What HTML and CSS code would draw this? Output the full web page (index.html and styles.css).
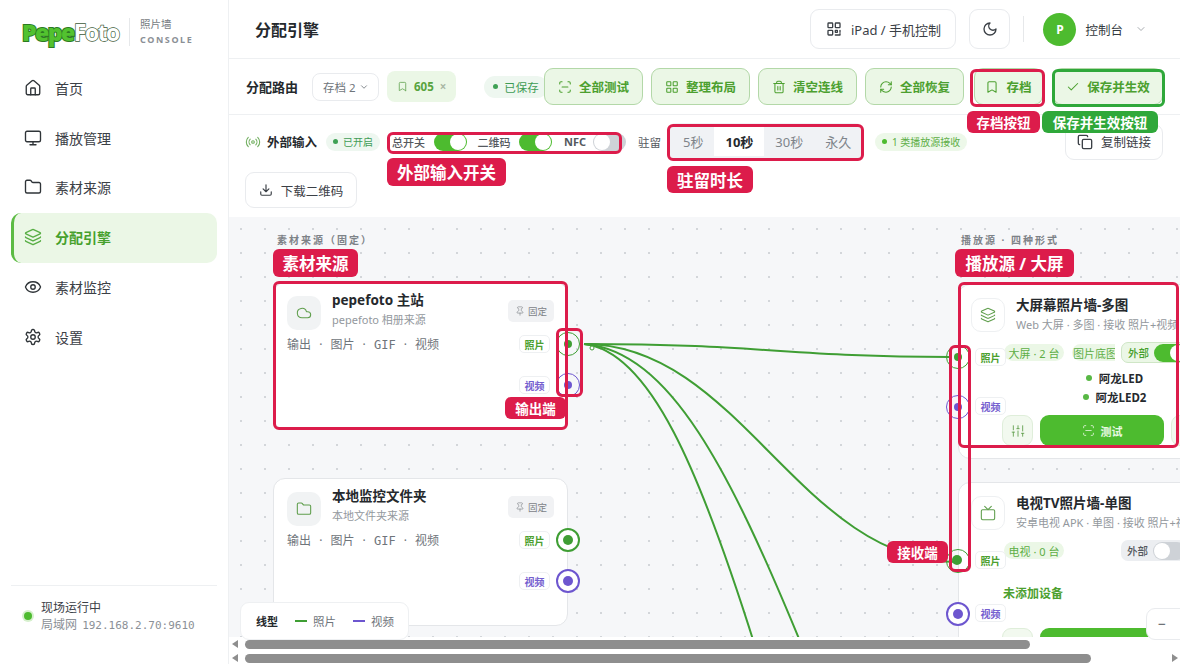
FILE: index.html
```html
<!DOCTYPE html>
<html lang="zh-CN">
<head>
    <meta charset="UTF-8">
    <meta name="viewport" content="width=device-width, initial-scale=1.0">
    <title>分配引擎 - PepeFoto Console</title>
    <link rel="stylesheet" href="styles.css">
</head>
<body>
    <!-- icon sprite -->
    <svg class="sprite" aria-hidden="true">
        <symbol id="i-home" viewBox="0 0 24 24"><path d="M15 21v-8a1 1 0 0 0-1-1h-4a1 1 0 0 0-1 1v8"/><path d="M3 10a2 2 0 0 1 .709-1.528l7-6a2 2 0 0 1 2.582 0l7 6A2 2 0 0 1 21 10v9a2 2 0 0 1-2 2H5a2 2 0 0 1-2-2z"/></symbol>
        <symbol id="i-monitor" viewBox="0 0 24 24"><rect x="2" y="3" width="20" height="14" rx="2"/><path d="M8 21h8M12 17v4"/></symbol>
        <symbol id="i-folder" viewBox="0 0 24 24"><path d="M20 20a2 2 0 0 0 2-2V8a2 2 0 0 0-2-2h-7.9a2 2 0 0 1-1.69-.9L9.6 3.9A2 2 0 0 0 7.93 3H4a2 2 0 0 0-2 2v13a2 2 0 0 0 2 2Z"/></symbol>
        <symbol id="i-layers" viewBox="0 0 24 24"><path d="M12.83 2.18a2 2 0 0 0-1.66 0L2.6 6.08a1 1 0 0 0 0 1.83l8.58 3.91a2 2 0 0 0 1.66 0l8.58-3.9a1 1 0 0 0 0-1.83z"/><path d="M2 12a1 1 0 0 0 .58.91l8.6 3.91a2 2 0 0 0 1.65 0l8.58-3.9A1 1 0 0 0 22 12"/><path d="M2 17a1 1 0 0 0 .58.91l8.6 3.91a2 2 0 0 0 1.65 0l8.58-3.9A1 1 0 0 0 22 17"/></symbol>
        <symbol id="i-eye" viewBox="0 0 24 24"><path d="M2.062 12.348a1 1 0 0 1 0-.696 10.75 10.75 0 0 1 19.876 0 1 1 0 0 1 0 .696 10.75 10.75 0 0 1-19.876 0"/><circle cx="12" cy="12" r="3"/></symbol>
        <symbol id="i-gear" viewBox="0 0 24 24"><path d="M12.22 2h-.44a2 2 0 0 0-2 2v.18a2 2 0 0 1-1 1.73l-.43.25a2 2 0 0 1-2 0l-.15-.08a2 2 0 0 0-2.73.73l-.22.38a2 2 0 0 0 .73 2.73l.15.1a2 2 0 0 1 1 1.72v.51a2 2 0 0 1-1 1.74l-.15.09a2 2 0 0 0-.73 2.73l.22.38a2 2 0 0 0 2.73.73l.15-.08a2 2 0 0 1 2 0l.43.25a2 2 0 0 1 1 1.73V20a2 2 0 0 0 2 2h.44a2 2 0 0 0 2-2v-.18a2 2 0 0 1 1-1.73l.43-.25a2 2 0 0 1 2 0l.15.08a2 2 0 0 0 2.73-.73l.22-.39a2 2 0 0 0-.73-2.73l-.15-.08a2 2 0 0 1-1-1.74v-.5a2 2 0 0 1 1-1.74l.15-.09a2 2 0 0 0 .73-2.73l-.22-.38a2 2 0 0 0-2.73-.73l-.15.08a2 2 0 0 1-2 0l-.43-.25a2 2 0 0 1-1-1.73V4a2 2 0 0 0-2-2z"/><circle cx="12" cy="12" r="3"/></symbol>
        <symbol id="i-qr" viewBox="0 0 24 24"><rect x="3" y="3" width="7" height="7" rx="1"/><rect x="14" y="3" width="7" height="7" rx="1"/><rect x="3" y="14" width="7" height="7" rx="1"/><path d="M14 14h3v3h-3zM21 14v3M14 21h7v-2"/></symbol>
        <symbol id="i-moon" viewBox="0 0 24 24"><path d="M12 3a6 6 0 0 0 9 9 9 9 0 1 1-9-9Z"/></symbol>
        <symbol id="i-chevron" viewBox="0 0 24 24"><path d="m6 9 6 6 6-6"/></symbol>
        <symbol id="i-bookmark" viewBox="0 0 24 24"><path d="m19 21-7-4-7 4V5a2 2 0 0 1 2-2h10a2 2 0 0 1 2 2v16z"/></symbol>
        <symbol id="i-scan" viewBox="0 0 24 24"><path d="M3 7V5a2 2 0 0 1 2-2h2M17 3h2a2 2 0 0 1 2 2v2M21 17v2a2 2 0 0 1-2 2h-2M7 21H5a2 2 0 0 1-2-2v-2M7 12h10"/></symbol>
        <symbol id="i-grid" viewBox="0 0 24 24"><rect x="3" y="3" width="7" height="7" rx="1"/><rect x="14" y="3" width="7" height="7" rx="1"/><rect x="14" y="14" width="7" height="7" rx="1"/><rect x="3" y="14" width="7" height="7" rx="1"/></symbol>
        <symbol id="i-trash" viewBox="0 0 24 24"><path d="M3 6h18M19 6v14c0 1-1 2-2 2H7c-1 0-2-1-2-2V6M8 6V4c0-1 1-2 2-2h4c1 0 2 1 2 2v2M10 11v6M14 11v6"/></symbol>
        <symbol id="i-refresh" viewBox="0 0 24 24"><path d="M3 12a9 9 0 0 1 9-9 9.75 9.75 0 0 1 6.74 2.74L21 8"/><path d="M21 3v5h-5"/><path d="M21 12a9 9 0 0 1-9 9 9.75 9.75 0 0 1-6.74-2.74L3 16"/><path d="M8 16H3v5"/></symbol>
        <symbol id="i-check" viewBox="0 0 24 24"><path d="M20 6 9 17l-5-5"/></symbol>
        <symbol id="i-radio" viewBox="0 0 24 24"><path d="M4.9 19.1C1 15.2 1 8.8 4.9 4.9M7.8 16.2c-2.3-2.3-2.3-6.1 0-8.5M16.2 7.8c2.3 2.3 2.3 6.1 0 8.5M19.1 4.9C23 8.8 23 15.1 19.1 19"/><circle cx="12" cy="12" r="2"/></symbol>
        <symbol id="i-copy" viewBox="0 0 24 24"><rect x="8" y="8" width="14" height="14" rx="2"/><path d="M4 16c-1.1 0-2-.9-2-2V4c0-1.1.9-2 2-2h10c1.1 0 2 .9 2 2"/></symbol>
        <symbol id="i-download" viewBox="0 0 24 24"><path d="M21 15v4a2 2 0 0 1-2 2H5a2 2 0 0 1-2-2v-4M7 10l5 5 5-5M12 15V3"/></symbol>
        <symbol id="i-cloud" viewBox="0 0 24 24"><path d="M17.5 19H9a7 7 0 1 1 6.71-9h1.79a4.5 4.5 0 1 1 0 9Z"/></symbol>
        <symbol id="i-pin" viewBox="0 0 24 24"><path d="M12 17v5"/><path d="M9 10.76a2 2 0 0 1-1.11 1.79l-1.78.9A2 2 0 0 0 5 15.24V16a1 1 0 0 0 1 1h12a1 1 0 0 0 1-1v-.76a2 2 0 0 0-1.11-1.79l-1.78-.9A2 2 0 0 1 15 10.76V7a1 1 0 0 1 1-1 2 2 0 0 0 0-4H8a2 2 0 0 0 0 4 1 1 0 0 1 1 1z"/></symbol>
        <symbol id="i-tv" viewBox="0 0 24 24"><path d="m17 2-5 5-5-5"/><rect x="2" y="7" width="20" height="15" rx="2"/></symbol>
        <symbol id="i-sliders" viewBox="0 0 24 24"><path d="M4 21v-7M4 10V3M12 21v-9M12 8V3M20 21v-5M20 12V3M2 14h4M10 8h4M18 16h4"/></symbol>
    </svg>

    <div class="app">
        <aside class="sidebar">
            <div class="brand">
                <div class="logo"><span class="logo-a">Pepe</span><span class="logo-b">Foto</span></div>
                <div class="brand-sub">
                    <span>照片墙</span>
                    <span class="brand-console">CONSOLE</span>
                </div>
            </div>
            <nav class="nav">
                <a class="nav-item"><svg class="icon"><use href="#i-home"/></svg>首页</a>
                <a class="nav-item"><svg class="icon"><use href="#i-monitor"/></svg>播放管理</a>
                <a class="nav-item"><svg class="icon"><use href="#i-folder"/></svg>素材来源</a>
                <a class="nav-item active"><svg class="icon"><use href="#i-layers"/></svg>分配引擎</a>
                <a class="nav-item"><svg class="icon"><use href="#i-eye"/></svg>素材监控</a>
                <a class="nav-item"><svg class="icon"><use href="#i-gear"/></svg>设置</a>
            </nav>
            <div class="side-status">
                <span class="live-dot"></span>
                <div>
                    <div class="live-title">现场运行中</div>
                    <div class="live-addr">局域网 <span class="mono">192.168.2.70:9610</span></div>
                </div>
            </div>
        </aside>

        <main class="main">
            <header class="topbar">
                <h1>分配引擎</h1>
                <div class="top-actions">
                    <button class="btn-plain btn-ipad"><svg class="icon"><use href="#i-qr"/></svg>iPad / 手机控制</button>
                    <button class="btn-plain btn-moon"><svg class="icon"><use href="#i-moon"/></svg></button>
                    <span class="top-sep"></span>
                    <span class="avatar">P</span>
                    <span class="user-name">控制台</span>
                    <svg class="icon chevron"><use href="#i-chevron"/></svg>
                </div>
            </header>

            <section class="route-bar">
                <div class="route-left">
                    <strong class="route-title">分配路由</strong>
                    <span class="route-sep"></span>
                    <span class="select">存档 2<svg class="icon"><use href="#i-chevron"/></svg></span>
                    <span class="tag-605"><svg class="icon"><use href="#i-bookmark"/></svg>605<em>×</em></span>
                    <span class="pill pill-saved"><i></i>已保存</span>
                </div>
                <div class="route-actions">
                    <button class="btn-green"><svg class="icon"><use href="#i-scan"/></svg>全部测试</button>
                    <button class="btn-green"><svg class="icon"><use href="#i-grid"/></svg>整理布局</button>
                    <button class="btn-green"><svg class="icon"><use href="#i-trash"/></svg>清空连线</button>
                    <button class="btn-green"><svg class="icon"><use href="#i-refresh"/></svg>全部恢复</button>
                    <button class="btn-green btn-archive"><svg class="icon"><use href="#i-bookmark"/></svg>存档</button>
                    <button class="btn-green btn-apply"><svg class="icon"><use href="#i-check"/></svg>保存并生效</button>
                </div>
            </section>

            <section class="input-bar">
                <svg class="icon radio-icon"><use href="#i-radio"/></svg>
                <strong class="input-title">外部输入</strong>
                <span class="pill pill-on"><i></i>已开启</span>
                <div class="switches">
                    <span>总开关</span><span class="switch on"></span>
                    <span>二维码</span><span class="switch on"></span>
                    <span class="nfc">NFC</span><span class="switch"></span>
                </div>
                <span class="stay-label">驻留</span>
                <div class="segment">
                    <span>5秒</span><span class="current">10秒</span><span>30秒</span><span>永久</span>
                </div>
                <span class="pill pill-recv"><i></i>1 类播放源接收</span>
                <button class="btn-plain btn-copy"><svg class="icon"><use href="#i-copy"/></svg>复制链接</button>
                <button class="btn-plain btn-qr"><svg class="icon"><use href="#i-download"/></svg>下载二维码</button>
            </section>

            <section class="canvas">
                <svg class="wires" viewBox="229 216 951 448">
                    <path d="M584 343C760 343 790 356 950 356"/>
                    <path d="M584 343C740 343 800 561 958 561"/>
                    <path d="M584 343C670 350 730 470 802 645"/>
                    <path d="M584 343C650 350 700 470 755 645"/>
                    <circle class="wire-end" cx="592" cy="347" r="2"/>
                </svg>

                <div class="col-label col-src">素材来源（固定）</div>
                <div class="col-label col-dst">播放源 · 四种形式</div>

                <article class="node src src-1">
                    <div class="node-head">
                        <span class="node-icon"><svg class="icon"><use href="#i-cloud"/></svg></span>
                        <div class="node-text">
                            <h3>pepefoto 主站</h3>
                            <p>pepefoto 相册来源</p>
                        </div>
                        <span class="fixed"><svg class="icon"><use href="#i-pin"/></svg>固定</span>
                    </div>
                    <div class="node-meta">输出 <b>·</b> 图片 <b>·</b> <span class="mono">GIF</span> <b>·</b> 视频</div>
                    <span class="port-tag photo t-a">照片</span>
                    <span class="port photo p-a"></span>
                    <span class="port-tag video t-b">视频</span>
                    <span class="port video p-b"></span>
                </article>

                <article class="node src src-2">
                    <div class="node-head">
                        <span class="node-icon"><svg class="icon"><use href="#i-folder"/></svg></span>
                        <div class="node-text">
                            <h3>本地监控文件夹</h3>
                            <p>本地文件夹来源</p>
                        </div>
                        <span class="fixed"><svg class="icon"><use href="#i-pin"/></svg>固定</span>
                    </div>
                    <div class="node-meta">输出 <b>·</b> 图片 <b>·</b> <span class="mono">GIF</span> <b>·</b> 视频</div>
                    <span class="port-tag photo t-a">照片</span>
                    <span class="port photo p-a"></span>
                    <span class="port-tag video t-b">视频</span>
                    <span class="port video p-b"></span>
                </article>

                <article class="node dst dst-1">
                    <div class="node-head">
                        <span class="node-icon light"><svg class="icon"><use href="#i-layers"/></svg></span>
                        <div class="node-text">
                            <h3>大屏幕照片墙-多图</h3>
                            <p>Web 大屏 · 多图 · 接收 照片+视频</p>
                        </div>
                    </div>
                    <div class="node-chips">
                        <span class="chip">大屏 · 2 台</span>
                        <span class="chip chip-clip">图片底图</span>
                        <span class="ext on">外部<span class="switch on"></span></span>
                    </div>
                    <ul class="devices">
                        <li>阿龙LED</li>
                        <li>阿龙LED2</li>
                    </ul>
                    <div class="node-actions">
                        <button class="btn-tune"><svg class="icon"><use href="#i-sliders"/></svg></button>
                        <button class="btn-test"><svg class="icon"><use href="#i-scan"/></svg>测试</button>
                        <button class="btn-tune"></button>
                    </div>
                    <span class="port photo p-in-a"></span>
                    <span class="port-tag photo t-in-a">照片</span>
                    <span class="port video p-in-b"></span>
                    <span class="port-tag video t-in-b">视频</span>
                </article>

                <article class="node dst dst-2">
                    <div class="node-head">
                        <span class="node-icon light"><svg class="icon"><use href="#i-tv"/></svg></span>
                        <div class="node-text">
                            <h3>电视TV照片墙-单图</h3>
                            <p>安卓电视 APK · 单图 · 接收 照片+视频</p>
                        </div>
                    </div>
                    <div class="node-chips">
                        <span class="chip">电视 · 0 台</span>
                        <span class="ext">外部<span class="switch"></span></span>
                    </div>
                    <div class="no-device">未添加设备</div>
                    <div class="node-actions">
                        <button class="btn-tune"><svg class="icon"><use href="#i-sliders"/></svg></button>
                        <button class="btn-test"><svg class="icon"><use href="#i-scan"/></svg>测试</button>
                    </div>
                    <span class="port photo p-in-c"></span>
                    <span class="port-tag photo t-in-c">照片</span>
                    <span class="port video p-in-d"></span>
                    <span class="port-tag video t-in-d">视频</span>
                </article>

                <div class="legend">
                    <strong>线型</strong>
                    <span><i class="line-photo"></i>照片</span>
                    <span><i class="line-video"></i>视频</span>
                </div>
                <div class="zoom-box">−</div>

                <div class="scroll scroll-1"><i class="arrow"></i><b></b></div>
                <div class="scroll scroll-2"><i class="arrow"></i><b></b><i class="arrow right"></i></div>
            </section>
        </main>

        <!-- red and green notes drawn on top of the screenshot -->
        <div class="notes">
            <div class="frame f-archive"></div>
            <div class="frame green f-apply"></div>
            <div class="frame f-switch"></div>
            <div class="frame f-stay"></div>
            <div class="frame f-src"></div>
            <div class="frame f-out"></div>
            <div class="frame f-dst"></div>
            <div class="frame f-in"></div>
            <span class="note small n-archive">存档按钮</span>
            <span class="note small green n-apply">保存并生效按钮</span>
            <span class="note n-switch">外部输入开关</span>
            <span class="note n-stay">驻留时长</span>
            <span class="note n-src">素材来源</span>
            <span class="note small n-out">输出端</span>
            <span class="note n-dst">播放源 / 大屏</span>
            <span class="note small n-in">接收端</span>
        </div>
    </div>
</body>
</html>
```

FILE: styles.css
```css
:root {
    --green: #4dbb2f;
    --green-dark: #46a02c;
    --green-soft: #ebf7e6;
    --wire: #3f9e34;
    --violet: #6d56cf;
    --red: #dc1c4b;
    --note-green: #2fa83a;
    --line: #eef0f2;
    --text: #333a40;
    --muted: #8b9096;
}

* {
    box-sizing: border-box;
}

body {
    margin: 0;
    font-family: "Noto Sans", "Noto Sans CJK SC", sans-serif;
    color: var(--text);
    background: #fff;
}

button {
    font: inherit;
    cursor: pointer;
}

.sprite {
    display: none;
}

.icon {
    width: 16px;
    height: 16px;
    flex: none;
    fill: none;
    stroke: currentColor;
    stroke-width: 2;
    stroke-linecap: round;
    stroke-linejoin: round;
}

.mono {
    font-family: "DejaVu Sans Mono", monospace;
}

.app {
    position: relative;
    display: flex;
    height: 664px;
    overflow: hidden;
}

/* sidebar */
.sidebar {
    width: 229px;
    flex: none;
    display: flex;
    flex-direction: column;
    border-right: 1px solid var(--line);
}

.brand {
    display: flex;
    align-items: center;
    height: 64px;
    padding-left: 22px;
}

.logo {
    width: 107px;
    font-family: "Open Sans", sans-serif;
    font-size: 23px;
    font-weight: 800;
    letter-spacing: -1.5px;
    -webkit-text-stroke: 2px #2c7a22;
    paint-order: stroke fill;
}

.logo-a {
    color: #52c22f;
}

.logo-b {
    color: #fff;
    font-weight: 700;
    -webkit-text-stroke: 1.3px #3c5a38;
}

.brand-sub {
    display: flex;
    flex-direction: column;
    gap: 2px;
    padding-left: 10px;
    border-left: 1px solid #e6e8ea;
    font-size: 10.5px;
    line-height: 13px;
    color: #777c82;
}

.brand-console {
    font-size: 9px;
    font-weight: 700;
    letter-spacing: 1.6px;
    color: #8b9096;
}

.nav {
    display: flex;
    flex-direction: column;
    padding: 0 11px;
}

.nav-item {
    display: flex;
    align-items: center;
    gap: 13px;
    height: 49.8px;
    padding-left: 13px;
    padding-bottom: 2px;
    font-size: 14px;
    color: #3b4046;
}

.nav-item .icon {
    width: 18px;
    height: 18px;
    stroke-width: 1.8;
    color: #2f3438;
}

.nav-item.active {
    padding-left: 10px;
    background: var(--green-soft);
    border-left: 3px solid #5cbb44;
    border-radius: 10px;
    font-weight: 700;
    color: var(--green-dark);
}

.nav-item.active .icon {
    color: #58ae45;
}

.side-status {
    display: flex;
    align-items: center;
    gap: 9px;
    margin: auto 11px 0;
    height: 79px;
    padding: 0 0 18px 13px;
    border-top: 1px solid var(--line);
}

.live-dot {
    width: 8px;
    height: 8px;
    border-radius: 50%;
    background: var(--green);
    box-shadow: 0 0 0 2px #d6f0cd;
}

.live-title {
    font-size: 12px;
    line-height: 17px;
    color: #3b4046;
}

.live-addr {
    font-size: 12px;
    line-height: 17px;
    word-spacing: 2px;
    color: var(--muted);
}

.live-addr .mono {
    font-size: 11px;
}

/* main column */
.main {
    flex: 1;
    min-width: 0;
    display: flex;
    flex-direction: column;
}

.topbar {
    display: flex;
    align-items: center;
    justify-content: space-between;
    height: 59px;
    flex: none;
    padding: 0 33px 0 26px;
    border-bottom: 1px solid var(--line);
}

.topbar h1 {
    margin: 0;
    font-size: 16px;
    font-weight: 700;
    color: #25292d;
}

.top-actions {
    display: flex;
    align-items: center;
}

.btn-plain {
    display: inline-flex;
    align-items: center;
    justify-content: center;
    background: #fff;
    border: 1px solid #e9ebee;
    border-radius: 9px;
    color: #3b4046;
}

.btn-ipad {
    width: 146px;
    height: 40px;
    gap: 9px;
    font-size: 13px;
}

.btn-moon {
    width: 41px;
    height: 40px;
    margin-left: 13px;
}

.top-sep {
    width: 1px;
    height: 26px;
    margin: 0 19px 0 13px;
    background: #e6e8ea;
}

.avatar {
    display: flex;
    align-items: center;
    justify-content: center;
    width: 33px;
    height: 33px;
    border-radius: 50%;
    background: var(--green);
    color: #fff;
    font-size: 12px;
    font-weight: 700;
}

.user-name {
    margin-left: 9px;
    font-size: 12.5px;
}

.chevron {
    width: 12px;
    height: 12px;
    margin-left: 12px;
    stroke-width: 1.5;
    color: #8b9096;
}

/* route toolbar */
.route-bar {
    display: flex;
    align-items: center;
    height: 56px;
    flex: none;
    padding: 0 17px;
    border-bottom: 1px solid var(--line);
}

.route-left {
    flex: 1;
    min-width: 0;
    display: flex;
    align-items: center;
    overflow: hidden;
    white-space: nowrap;
}

.route-title {
    font-size: 13px;
    color: #25292d;
}

.route-sep {
    width: 1px;
    height: 18px;
    margin: 0 7px 0 7px;
    background: var(--line);
}

.select {
    display: inline-flex;
    align-items: center;
    gap: 3px;
    width: 67px;
    height: 28px;
    padding: 0 0 0 10px;
    flex: none;
    border: 1px solid #e9ebee;
    border-radius: 8px;
    font-size: 11.5px;
    color: #6f757b;
}

.select .icon {
    width: 10px;
    height: 10px;
}

.tag-605 {
    display: inline-flex;
    align-items: center;
    gap: 6px;
    height: 31px;
    padding: 0 10px 0 10px;
    margin-left: 8px;
    flex: none;
    background: var(--green-soft);
    border-radius: 8px;
    font-size: 11.5px;
    font-weight: 700;
    color: #58a33e;
}

.tag-605 .icon {
    width: 11px;
    height: 11px;
    color: #73ad62;
}

.tag-605 em {
    font-style: normal;
    color: #a9b7a4;
}

.pill {
    display: inline-flex;
    align-items: center;
    flex: none;
    border-radius: 11px;
    color: #46a02c;
}

.pill i {
    width: 5px;
    height: 5px;
    border-radius: 50%;
    background: #3fa155;
}

.pill-saved {
    gap: 6px;
    height: 22px;
    margin-left: 28px;
    padding: 0 9px;
    background: #eef7f0;
    font-size: 11.5px;
    color: #3f9c55;
}

.route-actions {
    display: flex;
    align-items: center;
    gap: 8px;
    flex: none;
}

.btn-green {
    display: inline-flex;
    align-items: center;
    justify-content: center;
    gap: 7px;
    width: 99px;
    height: 37px;
    padding: 0;
    background: var(--green-soft);
    border: 1px solid #b3d8a8;
    border-radius: 9px;
    font-size: 12.5px;
    font-weight: 700;
    color: #4ca02f;
}

.btn-green .icon {
    width: 14px;
    height: 14px;
    stroke-width: 1.8;
}

.btn-archive {
    width: 69px;
    margin-left: 2px;
    padding: 0;
}

.btn-apply {
    width: 110px;
    margin-left: 2px;
}

/* external input toolbar */
.input-bar {
    display: flex;
    flex-wrap: wrap;
    align-items: center;
    align-content: flex-start;
    height: 102px;
    flex: none;
    padding: 8px 17px 0 16px;
    row-gap: 12px;
}

.radio-icon {
    color: #6fae5d;
    stroke-width: 1.6;
}

.input-title {
    margin-left: 6px;
    font-size: 12.5px;
    color: #25292d;
}

.pill-on {
    gap: 5px;
    height: 18px;
    margin-left: 9px;
    padding: 0 7px;
    background: #eef7f0;
    font-size: 10px;
    color: #3f9c55;
}

.switches {
    display: flex;
    align-items: center;
    width: 236px;
    margin-left: 8px;
    padding-left: 4px;
    font-size: 11px;
    font-weight: 500;
    color: #55595e;
}

.switches span:not(.switch) {
    white-space: nowrap;
}

.switches .switch {
    margin: 0 11px 0 8.5px;
}

.switches .nfc {
    margin-left: 1px;
    margin-right: -2px;
    font-weight: 700;
}

.switch {
    position: relative;
    display: inline-block;
    flex: none;
    width: 33px;
    height: 18px;
    border-radius: 9px;
    background: #ced2d7;
}

.switch::after {
    content: "";
    position: absolute;
    top: 1px;
    left: 1px;
    width: 16px;
    height: 16px;
    border-radius: 50%;
    background: #fff;
}

.switch.on {
    background: var(--green);
}

.switch.on::after {
    left: 16px;
}

.stay-label {
    margin-left: 14px;
    font-size: 11.5px;
    color: #55595e;
}

.segment {
    display: flex;
    align-items: stretch;
    height: 37px;
    width: 195px;
    margin-left: 7px;
    padding: 4px 4px;
    background: #f0f2f5;
    border-radius: 8px;
    font-size: 13px;
    color: #7f858b;
}

.segment span {
    flex: none;
    display: flex;
    align-items: center;
    padding: 0 11px;
}

.segment .current {
    background: #fff;
    font-weight: 700;
    color: #25292d;
}

.pill-recv {
    gap: 5px;
    height: 18px;
    margin-left: 12px;
    padding: 0 7px;
    background: #edf8e9;
    font-size: 10px;
    color: #5dae45;
}

.pill-recv i {
    background: var(--green);
}

.btn-copy {
    width: 98px;
    height: 36px;
    margin-left: auto;
    gap: 8px;
    font-size: 12.5px;
}

.btn-qr {
    width: 112px;
    height: 36px;
    gap: 8px;
    font-size: 12.5px;
}

.btn-qr .icon {
    width: 14px;
    height: 14px;
}

/* canvas */
.canvas {
    position: relative;
    flex: 1;
    overflow: hidden;
    background-color: #f6f7f9;
    background-image: radial-gradient(circle at 12px 12px, #d3d6da 1px, transparent 1.3px);
    background-size: 24px 24px;
}

.wires {
    position: absolute;
    inset: 0;
    width: 951px;
    height: 448px;
    z-index: 2;
    fill: none;
    stroke: var(--wire);
    stroke-width: 2;
}

.wire-end {
    stroke-width: 1;
    fill: #fff;
}

.col-label {
    position: absolute;
    top: 15px;
    font-size: 10px;
    font-weight: 700;
    letter-spacing: 2px;
    color: #7d8287;
}

.col-src {
    left: 48px;
}

.col-dst {
    left: 732px;
}

.node {
    position: absolute;
    padding: 13px;
    background: #fff;
    border: 1px solid #e4e6e9;
    border-radius: 12px;
}

.src {
    width: 295px;
    height: 148px;
    left: 44px;
}

.src-1 {
    top: 65px;
}

.src-2 {
    top: 261px;
}

.dst {
    left: 729px;
    width: 326px;
    padding-left: 12px;
}

.dst-1 {
    top: 67px;
    height: 175px;
}

.dst-2 {
    top: 265px;
    height: 210px;
}

.node-head {
    display: flex;
    align-items: flex-start;
    gap: 11px;
}

.node-icon {
    display: flex;
    align-items: center;
    justify-content: center;
    width: 34px;
    height: 34px;
    flex: none;
    background: #f1f3f4;
    border-radius: 10px;
    color: #5f9e4c;
}

.node-icon.light {
    background: #fff;
    border: 1px solid #eef0f2;
}

.node-icon .icon {
    stroke-width: 1.6;
}

.node-text {
    flex: 1;
    min-width: 0;
    margin-top: -1px;
}

.src .node-text {
    margin-top: -4px;
}

.node-text h3 {
    margin: 0;
    font-size: 13.5px;
    line-height: 17px;
    font-weight: 700;
    color: #25292d;
    white-space: nowrap;
}

.node-text p {
    margin: 3px 0 0;
    font-size: 11px;
    line-height: 15px;
    color: #93989d;
    white-space: nowrap;
}

.fixed {
    display: inline-flex;
    align-items: center;
    justify-content: center;
    gap: 3px;
    width: 46px;
    height: 22px;
    margin-top: 4px;
    background: #f1f2f4;
    border-radius: 5px;
    font-size: 9.5px;
    color: #7d8287;
}

.fixed .icon {
    width: 10px;
    height: 10px;
    stroke-width: 1.5;
}

.node-meta {
    margin-top: 6px;
    font-size: 12px;
    line-height: 18px;
    color: #6f757b;
    word-spacing: 5px;
}

.node-meta b {
    font-weight: 400;
}

.port {
    position: absolute;
    width: 24px;
    height: 24px;
    border-radius: 50%;
    background: #fff;
    border: 2px solid;
    z-index: 3;
}

.port::after {
    content: "";
    position: absolute;
    top: 5px;
    left: 5px;
    width: 10px;
    height: 10px;
    border-radius: 50%;
    background: currentColor;
}

/* ports under the note frames look thinner in the reference */
.src-1 .port,
.dst-1 .port,
.p-in-c {
    border-width: 1.5px;
    background: transparent;
}

.src-1 .port::after,
.dst-1 .port::after {
    top: 6.5px;
    left: 6.5px;
    width: 8px;
    height: 8px;
}

.port.photo {
    color: var(--wire);
}

.port.video {
    color: var(--violet);
}

.port-tag {
    position: absolute;
    width: 31px;
    height: 18px;
    display: flex;
    align-items: center;
    justify-content: center;
    background: #fff;
    border: 1px solid #eef0f2;
    border-radius: 5px;
    font-size: 10px;
    font-weight: 700;
}

.port-tag.photo {
    color: #4ca02f;
}

.port-tag.video {
    color: #7560cf;
}

.t-a {
    left: 245px;
    top: 52px;
}

.t-b {
    left: 245px;
    top: 93px;
}

.p-a {
    left: 282px;
    top: 49px;
}

.p-b {
    left: 282px;
    top: 90px;
}

.p-in-a {
    left: -13px;
    top: 60px;
}

.t-in-a {
    left: 16px;
    top: 63px;
}

.p-in-b {
    left: -13px;
    top: 110px;
}

.t-in-b {
    left: 16px;
    top: 112px;
}

.p-in-c {
    left: -13px;
    top: 66px;
}

.t-in-c {
    left: 16px;
    top: 68px;
}

.p-in-d {
    left: -13px;
    top: 119px;
}

.t-in-d {
    left: 16px;
    top: 121px;
}

.node-chips {
    display: flex;
    align-items: center;
    gap: 8px;
    height: 21px;
    margin-top: 10px;
    padding-left: 33px;
}

.chip {
    display: inline-flex;
    align-items: center;
    justify-content: center;
    flex: none;
    width: 60px;
    height: 17px;
    background: var(--green-soft);
    border-radius: 9px;
    font-size: 11px;
    color: #5dae45;
    white-space: nowrap;
}

.chip-clip {
    width: 43px;
    justify-content: flex-start;
    padding-left: 1px;
    overflow: hidden;
    border-radius: 9px 0 0 9px;
}

.ext {
    display: inline-flex;
    align-items: center;
    gap: 5px;
    flex: none;
    width: 80px;
    height: 21px;
    margin-left: 49px;
    padding: 0 2px 0 6px;
    background: #eceef1;
    border-radius: 7px;
    font-size: 10.5px;
    font-weight: 500;
    white-space: nowrap;
    color: #55595e;
}

.ext.on {
    background: var(--green-soft);
    border: 1px solid #cfe6c6;
    margin-left: -2px;
    color: #46a02c;
}

.devices {
    display: flex;
    flex-direction: column;
    align-items: center;
    gap: 1px;
    margin: 7px 0 0;
    padding: 0 12px 0 0;
    list-style: none;
    font-size: 11.5px;
    line-height: 18px;
    font-weight: 700;
    color: #25292d;
}

.devices li::before {
    content: "";
    display: inline-block;
    width: 6px;
    height: 6px;
    margin-right: 7px;
    vertical-align: 2px;
    border-radius: 50%;
    background: #58b845;
}

.no-device {
    margin: 24px 0 0 32px;
    font-size: 12px;
    line-height: 18px;
    font-weight: 700;
    color: #4ca02f;
}

.node-actions {
    display: flex;
    gap: 7px;
    margin-top: 8px;
    padding-left: 31px;
}

.no-device + .node-actions {
    margin-top: 25px;
}

.btn-tune {
    display: flex;
    align-items: center;
    justify-content: center;
    width: 31px;
    height: 31px;
    flex: none;
    padding: 0;
    background: #f2f9ef;
    border: 1px solid #dfeeda;
    border-radius: 9px;
    color: #5f9e4c;
}

.btn-tune .icon {
    width: 14px;
    height: 14px;
    stroke-width: 1.5;
}

.btn-test {
    display: flex;
    align-items: center;
    justify-content: center;
    gap: 6px;
    width: 124px;
    height: 31px;
    flex: none;
    padding: 0;
    background: var(--green);
    border: none;
    border-radius: 9px;
    font-size: 11px;
    font-weight: 700;
    color: #e8f8e2;
}

.btn-test .icon {
    width: 13px;
    height: 13px;
    stroke-width: 1.5;
}

.legend {
    position: absolute;
    left: 11px;
    top: 385px;
    z-index: 4;
    display: flex;
    align-items: center;
    gap: 17px;
    width: 169px;
    height: 38px;
    padding-left: 15px;
    background: #fff;
    border: 1px solid #eef0f2;
    border-radius: 9px;
    font-size: 11.5px;
    color: #6f757b;
}

.legend strong {
    color: #25292d;
    font-size: 11px;
}

.legend span {
    display: flex;
    align-items: center;
    gap: 6px;
}

.legend i {
    width: 12px;
    height: 2px;
}

.line-photo {
    background: var(--wire);
}

.line-video {
    background: var(--violet);
}

.zoom-box {
    position: absolute;
    left: 917px;
    top: 391px;
    z-index: 4;
    width: 50px;
    height: 32px;
    padding-left: 11px;
    background: #fff;
    border: 1px solid #e9ebee;
    border-radius: 9px;
    font-size: 14px;
    line-height: 30px;
    color: #55595e;
}

.scroll {
    position: absolute;
    left: 0;
    z-index: 3;
    width: 100%;
    height: 14px;
    background: #fff;
    display: flex;
    align-items: center;
}

.scroll-1 {
    top: 420px;
}

.scroll-2 {
    top: 434px;
}

.scroll b {
    position: absolute;
    left: 16px;
    height: 9px;
    border-radius: 5px;
    background: #8e8e8e;
}

.scroll-1 b {
    width: 785px;
}

.scroll-2 b {
    width: 846px;
}

.arrow {
    position: absolute;
    left: 3px;
    border: 4px solid transparent;
    border-left: 0;
    border-right: 6px solid #8e8e8e;
}

.arrow.right {
    left: auto;
    right: 2px;
    border-right: 0;
    border-left: 6px solid #8e8e8e;
}

/* annotations */
.notes {
    position: absolute;
    inset: 0;
    z-index: 10;
    pointer-events: none;
}

.frame {
    position: absolute;
    border: 3px solid var(--red);
    border-radius: 6px;
}

.frame.green {
    border-color: var(--note-green);
}

.note {
    position: absolute;
    display: flex;
    align-items: center;
    justify-content: center;
    height: 28px;
    background: var(--red);
    border-radius: 6px;
    color: #fff;
    font-size: 16.5px;
    font-weight: 700;
    white-space: nowrap;
}

.note.small {
    height: 22px;
    font-size: 13.5px;
}

.note.green {
    background: var(--note-green);
}

.f-archive { left: 970px; top: 69px; width: 75px; height: 38px; }
.f-apply { left: 1052px; top: 69px; width: 113px; height: 38px; }
.f-switch { left: 387px; top: 132px; width: 235px; height: 22px; }
.f-stay { left: 667px; top: 124px; width: 197px; height: 37px; }
.f-src { left: 273px; top: 281px; width: 295px; height: 149px; }
.f-out { left: 556px; top: 328px; width: 27px; height: 69px; }
.f-dst { left: 958px; top: 282px; width: 221px; height: 166px; }
.f-in { left: 949px; top: 345px; width: 22px; height: 227px; }

.n-archive { left: 967px; top: 111px; width: 73px; }
.n-apply { left: 1042px; top: 111px; width: 116px; height: 24px; }
.n-switch { left: 387px; top: 158px; width: 119px; }
.n-stay { left: 667px; top: 166px; width: 86px; height: 27px; }
.n-src { left: 273px; top: 249px; width: 85px; }
.n-out { left: 505px; top: 397px; width: 61px; }
.n-dst { left: 955px; top: 249px; width: 119px; }
.n-in { left: 887px; top: 541px; width: 61px; }
```
